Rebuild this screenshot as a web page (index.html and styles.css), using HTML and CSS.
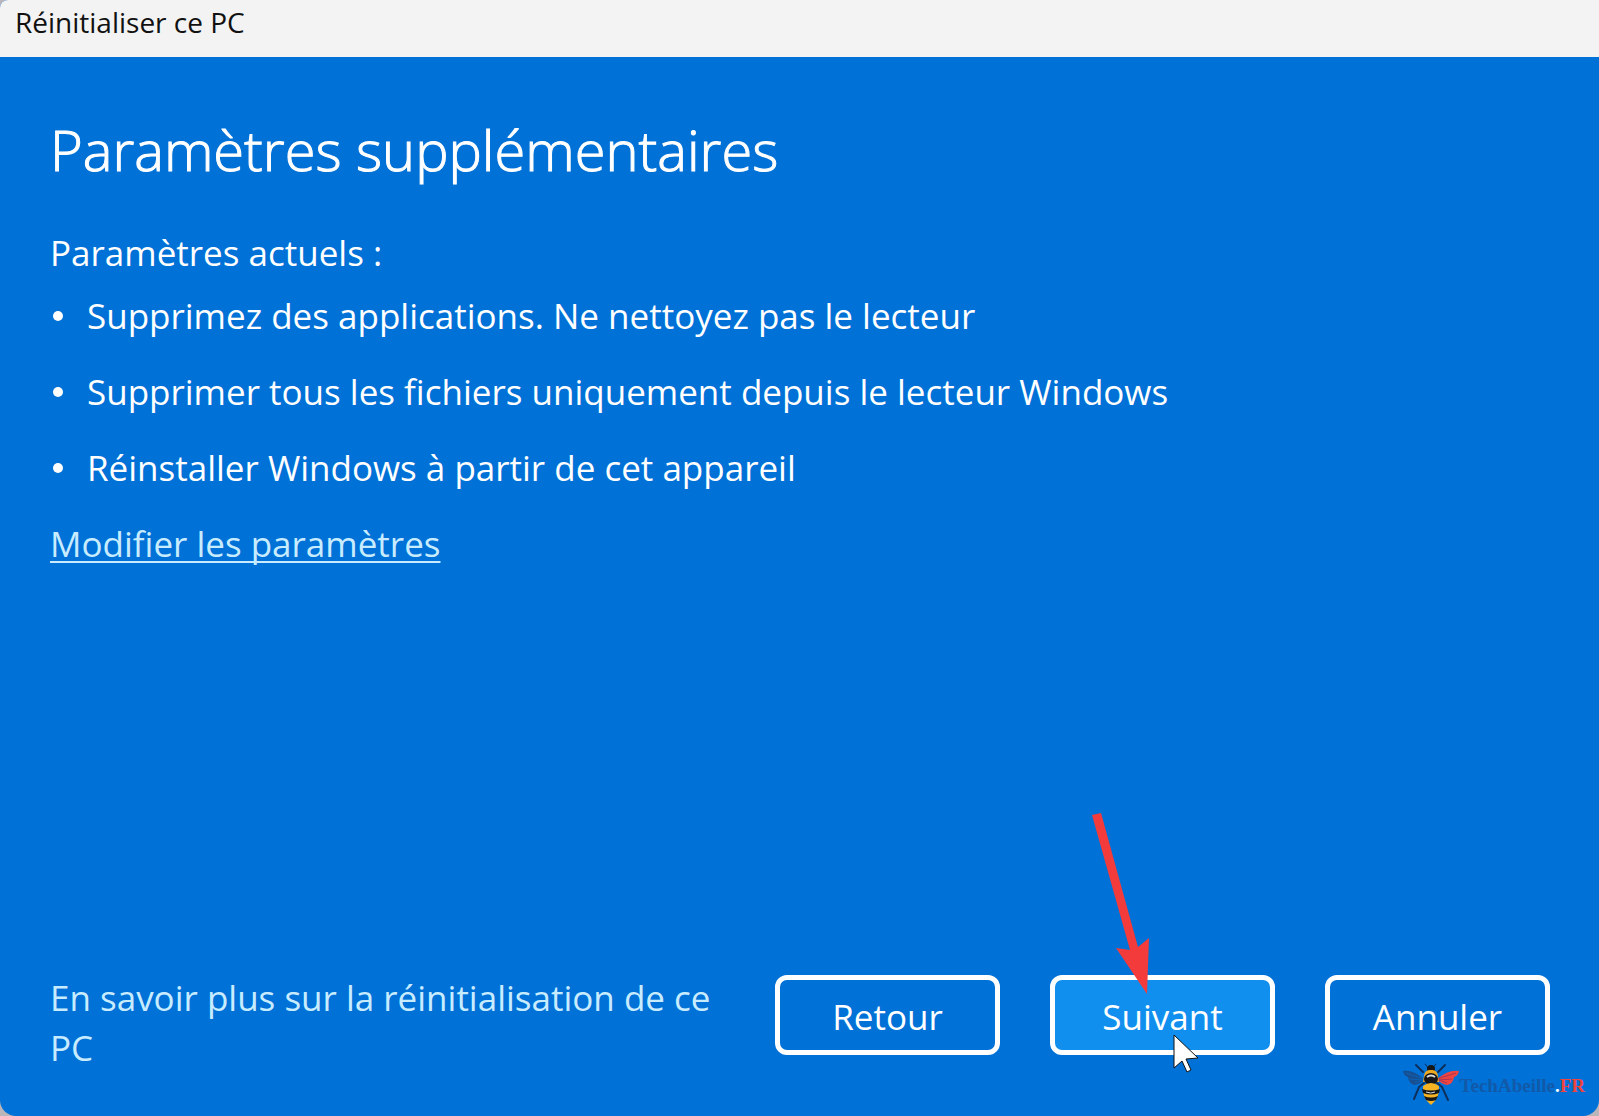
FILE: index.html
```html
<!DOCTYPE html>
<html lang="fr">
<head>
    <meta charset="UTF-8">
    <meta name="viewport" content="width=device-width, initial-scale=1.0">
    <title>Réinitialiser ce PC</title>
    <link rel="stylesheet" href="styles.css">
</head>
<body>
    <div class="window">
        <header class="title-bar">Réinitialiser ce PC</header>

        <main class="content">
            <h1>Paramètres supplémentaires</h1>
            <p class="current">Paramètres actuels :</p>
            <ul class="settings">
                <li>Supprimez des applications. Ne nettoyez pas le lecteur</li>
                <li>Supprimer tous les fichiers uniquement depuis le lecteur Windows</li>
                <li>Réinstaller Windows à partir de cet appareil</li>
            </ul>
            <a class="change-link" href="#">Modifier les paramètres</a>
        </main>

        <footer class="footer">
            <a class="learn-more" href="#">En savoir plus sur la réinitialisation de ce PC</a>
            <div class="buttons">
                <button type="button" class="btn">Retour</button>
                <div class="next-wrap">
                    <button type="button" class="btn btn-next">Suivant</button>
                    <svg class="arrow" width="60" height="184" viewBox="0 0 60 184" aria-hidden="true">
                        <path d="M0 2 L9 0 L46 134 L57 125 L55 181 L24 135 L38 137 Z" fill="#f43b3b"/>
                    </svg>
                    <svg class="pointer" width="27" height="40" viewBox="0 0 27 40" aria-hidden="true">
                        <path d="M1 1 L1 34 L9 27 L14 38 L18 36 L13 25 L25 24 Z" fill="#fff" stroke="#111" stroke-width="1"/>
                    </svg>
                </div>
                <button type="button" class="btn">Annuler</button>
            </div>
        </footer>

        <div class="brand">
            <svg width="58" height="44" viewBox="0 0 58 44" aria-hidden="true">
                <g fill="none" stroke="#0d2f5c" stroke-width="2" stroke-linecap="round">
                    <path d="M26 6 Q24 2 23 2 M31 6 Q33 2 34 2" stroke-width="1"/>
                    <path d="M21 10 L14 3 M36 10 L43 3"/>
                    <path d="M22 21 L17 25 L12 37 M35 21 L40 25 L46 38"/>
                </g>
                <path d="M22 17 Q10 7 1 9 Q2 14 6 15 Q7 22 13 23 Q19 22 22 17 Z" fill="#174f91"/>
                <path d="M35 17 Q47 7 57 9 Q56 14 52 15 Q51 22 45 23 Q39 22 35 17 Z" fill="#f0443f"/>
                <path d="M22 17 L4 11 M21 18 L8 17 M20 18 L13 21" stroke="#0b62b8" fill="none"/>
                <path d="M35 17 L54 11 M36 18 L50 17 M37 18 L45 21" stroke="#a63655" fill="none"/>
                <ellipse cx="29" cy="7" rx="4" ry="4" fill="#171717"/>
                <path d="M22 14 Q23 7 29 8 Q35 7 36 14 L37 20 H21 Z" fill="#edaa20"/>
                <ellipse cx="29" cy="17" rx="7" ry="6" fill="#171717"/>
                <path d="M25 15 Q29 12 33 15" fill="none" stroke="#ddd" stroke-width="2"/>
                <path d="M21 24 Q29 18 37 24 Q38 36 29 43 Q20 36 21 24 Z" fill="#f7b321"/>
                <path d="M20 27 Q29 30 38 27 L37 31 Q29 34 21 31 Z" fill="#171717"/>
                <path d="M22 34 Q29 37 36 34 L34 38 Q29 40 24 38 Z" fill="#171717"/>
                <path d="M24 30 Q29 32 33 30" fill="none" stroke="#ddd"/>
            </svg>
            <span class="brand-name">TechAbeille<span class="dot">.</span><span class="tld">FR</span></span>
        </div>
    </div>
</body>
</html>
```

FILE: styles.css
```css
* {
    margin: 0;
    padding: 0;
    box-sizing: border-box;
}

body {
    background-color: #b9b5b8;
    font-family: "Open Sans", "Noto Sans", sans-serif;
}

.window {
    position: relative;
    display: flex;
    flex-direction: column;
    min-height: 100vh;
    background-color: #0071d7;
    border-radius: 8px 0 16px 16px;
    overflow: hidden;
    color: white;
    font-size: 35px;
    line-height: 50px;
}

.title-bar {
    height: 57px;
    padding: 2px 15px;
    background-color: #f3f3f3;
    color: #111;
    font-size: 28px;
    line-height: 40px;
}

.content {
    flex: 1;
    padding: 52px 50px 0;
}

h1 {
    font-size: 56px;
    font-weight: 300;
    line-height: 80px;
    -webkit-text-stroke: 1px white;
}

.current {
    margin-top: 39px;
}

.settings {
    margin-top: 13px;
    list-style: none;
}

.settings li {
    display: flex;
    align-items: center;
    margin-bottom: 26px;
}

.settings li::before {
    content: "";
    width: 10px;
    height: 10px;
    margin: 0 24px 0 3px;
    border-radius: 50%;
    background-color: white;
}

.change-link {
    color: #c8ecff;
    text-decoration-thickness: 2px;
    text-underline-offset: 4px;
    text-decoration-skip-ink: none;
}

.footer {
    display: flex;
    justify-content: space-between;
    align-items: flex-start;
    gap: 48px;
    padding: 0 49px 43px 50px;
}

.learn-more {
    flex: 1;
    color: #c8ecff;
    text-decoration: none;
}

.buttons {
    display: flex;
    gap: 50px;
    padding-top: 2px;
}

.btn {
    width: 225px;
    height: 80px;
    padding-top: 4px;
    border: 5px solid white;
    border-radius: 12px;
    background-color: transparent;
    color: white;
    font: inherit;
    cursor: pointer;
}

.btn-next {
    background-color: #118fef;
}

.next-wrap {
    position: relative;
    height: 80px;
}

.arrow {
    position: absolute;
    left: 42px;
    top: -162px;
}

.pointer {
    position: absolute;
    left: 123px;
    top: 59px;
}

.brand {
    position: absolute;
    right: 14px;
    bottom: 10px;
    display: flex;
    align-items: center;
}

.brand-name {
    padding-top: 4px;
    color: #1259a8;
    font-family: "Liberation Serif", serif;
    font-size: 19px;
    font-weight: bold;
    line-height: 24px;
}

.dot {
    color: white;
}

.tld {
    color: #f0443f;
}
```
